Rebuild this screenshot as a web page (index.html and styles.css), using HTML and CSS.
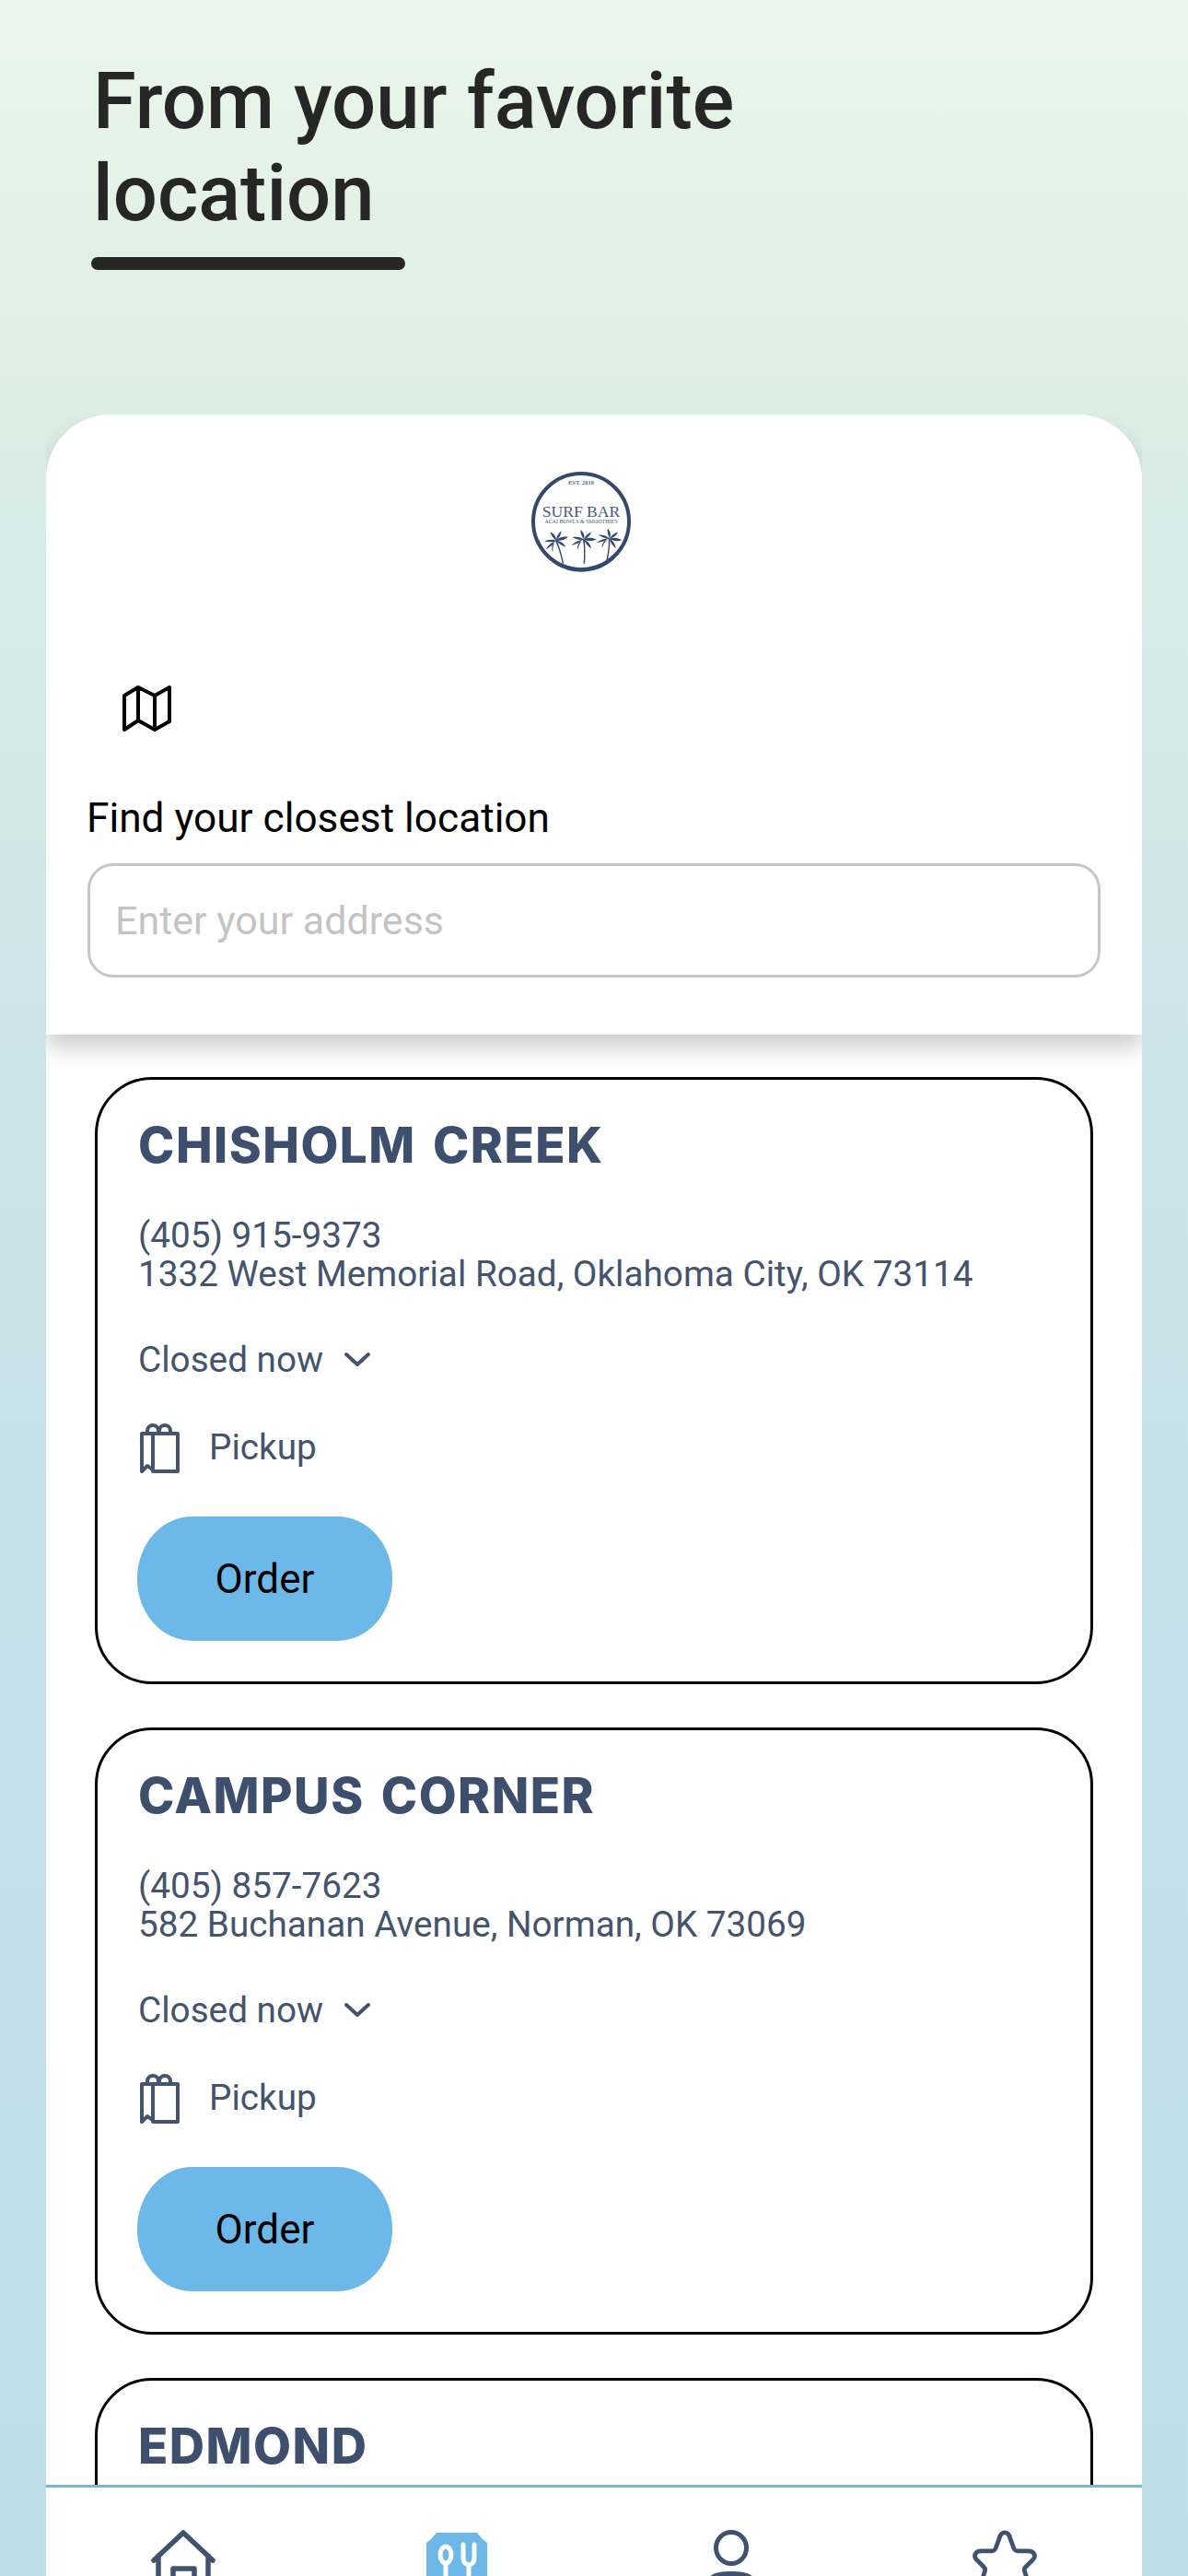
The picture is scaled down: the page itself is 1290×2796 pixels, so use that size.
FILE: index.html
```html
<!DOCTYPE html>
<html lang="en">
<head>
<meta charset="utf-8">
<title>Locations</title>
<link rel="stylesheet" href="styles.css">
</head>
<body>
<svg class="defs" width="0" height="0" aria-hidden="true">
  <symbol id="palm" viewBox="0 0 40 50">
    <path d="M20 14C14 15 7 17 2 23C8 20 14 20 20 14ZM20 14C14 10 8 10 3 11C9 13 14 16 20 14ZM20 14C17 10 15 5 15 0C19 3 22 8 20 14ZM20 14C22 9 26 5 31 3C29 8 26 12 20 14ZM20 14C26 11 32 11 38 14C32 17 26 17 20 14ZM20 14C25 16 29 20 31 27C26 24 22 20 20 14ZM20 14C16 17 12 22 11 29C9 23 14 16 20 14Z" fill="#34496b"/>
    <path d="M18.5 14C20.5 24 20.5 36 19.5 49H21.5C22.5 36 22 24 21 14Z" fill="#34496b"/>
  </symbol>
  <symbol id="bag" viewBox="0 0 50 60">
    <path d="M4 15H43V56H18L10 50L4 56ZM16 15V56M10 15V12A6 6 0 0 1 22 12V15M23 12A6 6 0 0 1 35 12V15" fill="none" stroke="#44536e" stroke-width="4" stroke-linejoin="round" stroke-linecap="round"/>
  </symbol>
  <symbol id="chev" viewBox="0 0 30 20">
    <path d="M3 4L15 15L27 4" fill="none" stroke="#44536e" stroke-width="4" stroke-linecap="round" stroke-linejoin="round"/>
  </symbol>
</svg>
<div class="screen">
  <header class="hero">
    <h1 class="hero-title">From your favorite location</h1>
    <div class="hero-rule"></div>
  </header>
  <main class="panel">
    <section class="finder">
      <svg class="logo" viewBox="0 0 170 140" width="170" height="140" role="img" aria-label="Surf Bar logo">
        <circle cx="71" cy="76" r="52" fill="none" stroke="#34496b" stroke-width="4"/>
        <path d="M24 97A51 51 0 0 0 121 90" fill="none" stroke="#34496b" stroke-width="3"/>
        <text class="logo-est" x="71" y="36" text-anchor="middle">EST. 2018</text>
        <text class="logo-name" x="71" y="71" text-anchor="middle">SURF BAR</text>
        <text class="logo-sub" x="71" y="78" text-anchor="middle">ACAI BOWLS &amp; SMOOTHIES</text>
        <use href="#palm" x="29" y="86" width="30" height="37.5" transform="rotate(-16 44 97)"/>
        <use href="#palm" x="59" y="85" width="30" height="37.5"/>
        <use href="#palm" x="87" y="84" width="30" height="37.5" transform="rotate(8 102 94)"/>
      </svg>
      <svg class="map-icon" viewBox="0 0 60 60" width="60" height="60">
        <path d="M5 17L20 8L38 17L54 8V45L38 54L20 44L5 54ZM20 8V44M38 17V54" fill="none" stroke="#000" stroke-width="4" stroke-linejoin="round"/>
      </svg>
      <label class="find-label" for="addr">Find your closest location</label>
      <input class="find-input" id="addr" type="text" placeholder="Enter your address">
    </section>
    <section class="list">
      <article class="card">
        <h2 class="card-title">CHISHOLM CREEK</h2>
        <p class="card-info">(405) 915-9373<br>1332 West Memorial Road, Oklahoma City, OK 73114</p>
        <div class="hours"><span>Closed now</span><svg class="chev" width="30" height="20"><use href="#chev"/></svg></div>
        <div class="pickup"><svg class="bag" width="50" height="60"><use href="#bag"/></svg><span>Pickup</span></div>
        <button class="order" type="button">Order</button>
      </article>
      <article class="card">
        <h2 class="card-title">CAMPUS CORNER</h2>
        <p class="card-info">(405) 857-7623<br>582 Buchanan Avenue, Norman, OK 73069</p>
        <div class="hours"><span>Closed now</span><svg class="chev" width="30" height="20"><use href="#chev"/></svg></div>
        <div class="pickup"><svg class="bag" width="50" height="60"><use href="#bag"/></svg><span>Pickup</span></div>
        <button class="order" type="button">Order</button>
      </article>
      <article class="card">
        <h2 class="card-title">EDMOND</h2>
      </article>
    </section>
    <nav class="tabs">
      <a class="tab"><svg viewBox="0 0 80 80" width="80" height="80">
        <path d="M8 33L40 3L72 33M13 28V80M67 28V80M29 42H52V80M29 42V80" fill="none" stroke="#3f5270" stroke-width="5.5" stroke-linecap="round" stroke-linejoin="round"/>
      </svg></a>
      <a class="tab"><svg viewBox="0 0 80 80" width="80" height="80">
        <path d="M18 3H62L68 10L73 14V80H7V14L12 10Z" fill="#6cb8e8"/>
        <ellipse cx="28" cy="27" rx="6" ry="9" fill="none" stroke="#fff" stroke-width="5"/>
        <path d="M28 36V80M47 16V30C47 36 51 38 53 38C55 38 59 36 59 30V16M53 38V80" fill="none" stroke="#fff" stroke-width="5" stroke-linecap="round"/>
      </svg></a>
      <a class="tab"><svg viewBox="0 0 80 80" width="80" height="80">
        <ellipse cx="40" cy="19.5" rx="16.5" ry="17" fill="none" stroke="#3f5270" stroke-width="5"/>
        <path d="M15 55C15 47 28 45 40 45C52 45 65 47 65 55V80H15Z" fill="#3f5270"/>
      </svg></a>
      <a class="tab"><svg viewBox="-2 0 84 84" width="80" height="80">
        <path d="M34 9C36 1 44 1 46 9L50 20C51 23 52 24 55 24H67C74 24 76 30 72 34L64 42C62 44 62 46 63 48L68 64C70 70 64 74 58 70L40 60L22 70C16 74 10 70 12 64L17 48C18 46 18 44 16 42L8 34C4 30 6 24 13 24H25C28 24 29 23 30 20Z" fill="none" stroke="#3f5270" stroke-width="5" stroke-linejoin="round"/>
      </svg></a>
    </nav>
  </main>
</div>
</body>
</html>
```
FILE: styles.css
```css
* { box-sizing: border-box; }
html, body { margin: 0; padding: 0; }
body {
  width: 1290px;
  height: 2796px;
  overflow: hidden;
  font-family: Roboto, "Liberation Sans", sans-serif;
}
.defs { display: block; height: 0; }
.screen {
  width: 1290px;
  height: 2796px;
  display: flex;
  flex-direction: column;
  background: linear-gradient(180deg, #eaf6e9 0%, #dcede6 17%, #cde5e9 38%, #c4e0e8 65%, #bfdee9 100%);
}
.hero {
  height: 450px;
  flex: none;
  padding: 60px 0 0 99px;
}
.hero-title {
  margin: 0;
  width: 760px;
  padding-left: 2px;
  font-size: 85px;
  font-weight: 500;
  line-height: 100px;
  color: #262626;
}
.hero-rule {
  width: 341px;
  height: 14px;
  margin-top: 19px;
  border-radius: 7px;
  background: #262626;
}
.panel {
  flex: 1;
  min-height: 0;
  margin: 0 50px;
  display: flex;
  flex-direction: column;
  background: #fff;
  border-radius: 70px 70px 0 0;
}
.finder {
  position: relative;
  z-index: 1;
  height: 673px;
  flex: none;
  display: flex;
  flex-direction: column;
  align-items: flex-start;
  padding: 40px 45px 0;
  background: #fff;
  border-radius: 70px 70px 0 0;
  box-shadow: 0 14px 24px rgba(0, 0, 0, 0.2);
  clip-path: inset(0 0 -60px 0);
}
.logo { align-self: center; display: block; }
.logo-est { font: 700 6.5px "Liberation Serif", serif; fill: #5c6d88; }
.logo-name { font: 400 17.6px "Liberation Serif", serif; fill: #4a5b78; }
.logo-sub { font: 400 6px "Liberation Serif", serif; fill: #4a5b78; }
.map-icon { display: block; margin: 108px 0 0 35px; }
.find-label {
  display: block;
  margin: 62px 0 0 -1px;
  font-size: 44.2px;
  line-height: 56px;
  color: #000;
}
.find-input {
  display: block;
  width: 1100px;
  height: 124px;
  margin-top: 21px;
  padding: 0 27px;
  border: 3px solid #c6c6c6;
  border-radius: 28px;
  background: #fff;
  font-family: Roboto, sans-serif;
  font-size: 43px;
  color: #333;
  outline: none;
}
.find-input::placeholder { color: #c4c4c4; opacity: 1; }
.list {
  flex: 1;
  min-height: 0;
  overflow: hidden;
  padding: 46px 53px 0;
  display: flex;
  flex-direction: column;
  gap: 47px;
}
.card {
  flex: none;
  height: 659px;
  padding: 41px 44px 0;
  border: 3px solid #000;
  border-radius: 62px;
  background: #fff;
}
.card-title {
  margin: 0;
  font-family: Inter, "Liberation Sans", sans-serif;
  font-size: 53px;
  font-weight: 800;
  letter-spacing: 1.5px;
  word-spacing: 5px;
  line-height: 60px;
  color: #3d4f6d;
}
.card-info {
  margin: 47px 0 0;
  font-size: 38.7px;
  line-height: 42px;
  color: #44536e;
}
.hours {
  display: flex;
  align-items: center;
  gap: 22px;
  margin-top: 47px;
  font-size: 38.7px;
  line-height: 50px;
  color: #44536e;
}
.chev { display: block; }
.pickup {
  display: flex;
  align-items: center;
  gap: 27px;
  margin-top: 40px;
  font-size: 38.7px;
  line-height: 60px;
  color: #44536e;
}
.bag { display: block; }
.order {
  display: block;
  width: 277px;
  height: 135px;
  margin: 45px 0 0 -1px;
  padding: 0;
  border: 0;
  border-radius: 60px / 67px;
  background: #6cb8e8;
  font-family: Roboto, sans-serif;
  font-size: 44px;
  color: #000;
}
.tabs {
  flex: none;
  height: 99px;
  padding-top: 46px;
  overflow: hidden;
  display: grid;
  grid-template-columns: repeat(4, 1fr);
  align-items: start;
  justify-items: center;
  border-top: 3px solid #74b8dc;
  background: #fff;
  position: relative;
  z-index: 1;
}
.tab svg { display: block; }
```
